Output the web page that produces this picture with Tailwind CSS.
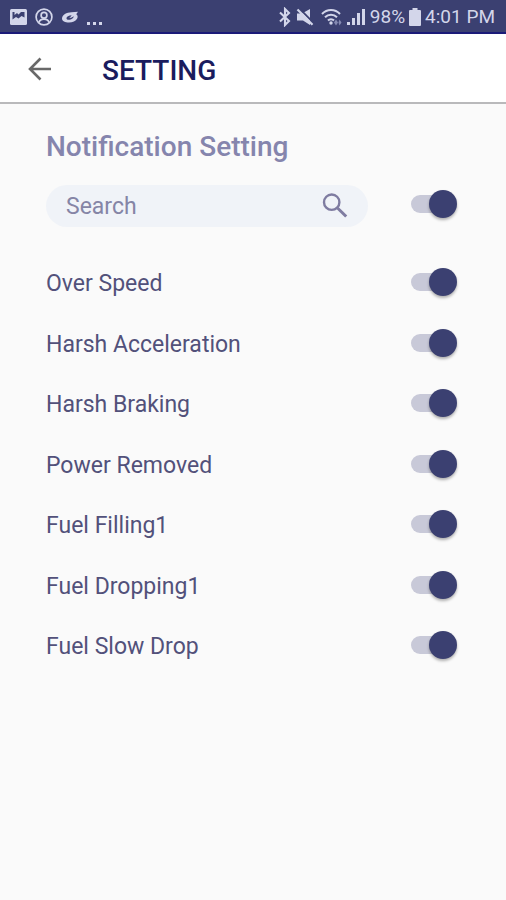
<!DOCTYPE html>
<html lang="en">
<head>
<meta charset="utf-8">
<meta name="viewport" content="width=device-width, initial-scale=1">
<title>Setting</title>
<script src="https://cdn.jsdelivr.net/npm/@tailwindcss/browser@4"></script>
</head>
<body class="min-h-screen bg-[#fafafa] font-['Roboto',sans-serif] text-[#52517a]">
  <!-- Status bar -->
  <div class="flex h-[34px] items-center justify-between border-b-2 border-[#1b1b78] bg-[#3b4071] pt-[2px] pr-[11px] pl-[9px] text-[#d3d6ea]">
    <div class="flex items-center gap-2">
      <svg class="h-[18px] w-[18px]" viewBox="0 0 18 18" aria-hidden="true">
        <rect x="1" y="1" width="17" height="16" rx="1.500" fill="currentColor"/>
        <path d="M3.500 4h2v3l2.500-2 1.500 1.500L12 4h3.500v5.500L12.500 8 9.500 10.500 7 9l-3.500 2.500z" fill="#3b4071"/>
      </svg>
      <svg class="h-[18px] w-[18px]" viewBox="0 0 18 18" fill="none" stroke="currentColor" stroke-width="1.700" aria-hidden="true">
        <circle cx="9" cy="9" r="7.900"/>
        <circle cx="9" cy="7.200" r="2.900"/>
        <path d="M4 14.500c.5-2.200 2.300-3.300 5-3.300s4.500 1.100 5 3.300"/>
      </svg>
      <svg class="h-[18px] w-[18px]" viewBox="0 0 18 18" aria-hidden="true">
        <path fill="currentColor" fill-rule="evenodd" d="M1 10.500C1 6.800 5.500 4.300 10.500 4.200l6.500-.4-1.800 2.400c1.600 1 1.800 2.600 1 4.300-1.300 2.700-4.700 4-8.200 4-3.900 0-7-1.300-7-4zM5.500 10.300c0 1.300 1.600 1.700 3.300 1.400 2-.4 3.800-1.800 4-3.500-1.200 1-2.600 1.700-4.600 1.500.9-.6 1.900-1.500 2.400-2.500-2.600.1-5.100 1.300-5.100 3.100z"/>
      </svg>
      <svg class="h-[18px] w-[16px]" viewBox="0 0 16 18" fill="currentColor" aria-hidden="true">
        <rect x="0" y="14" width="3" height="3"/><rect x="6" y="14" width="3" height="3"/><rect x="12" y="14" width="3" height="3"/>
      </svg>
    </div>
    <div class="flex items-center">
      <svg class="mr-[5px] h-[20px] w-[12px]" viewBox="0 0 12 20" fill="none" stroke="currentColor" stroke-width="2.100" aria-hidden="true">
        <path d="M1 5.500l9 8.500-4 4V2l4 4-9 8.500"/>
      </svg>
      <svg class="mr-[7px] h-[18px] w-[18px]" viewBox="0 0 18 18" aria-hidden="true">
        <path d="M1 5.500h5l8-4.500v16l-7-4.500H1z" fill="currentColor"/>
        <path d="M3.200 .3l15 15.200" stroke="#3b4071" stroke-width="1.800"/>
        <path d="M1.500 1.500l15 15.200" stroke="currentColor" stroke-width="2.200"/>
      </svg>
      <svg class="mr-[3px] h-[18px] w-[23px]" viewBox="0 0 23 18" fill="none" stroke="currentColor" stroke-width="2" aria-hidden="true">
        <path d="M1 6c5-5.300 13-5.300 18 0M4 9.300c3.300-3.500 8.700-3.500 12 0M7 12.500c1.600-1.700 4.400-1.700 6 0"/>
        <circle cx="10" cy="15" r="1.700" fill="currentColor" stroke="none"/>
        <g stroke="none" fill="#858ab2"><path d="M13 14.500l2-3 2 3-2 3zM18.500 11.500l2 3-2 3-1-3z"/></g>
      </svg>
      <svg class="mr-[5px] h-[18px] w-[18px]" viewBox="0 0 18 18" fill="currentColor" aria-hidden="true">
        <rect x="0" y="14" width="3" height="3"/><rect x="5" y="10" width="3" height="7"/><rect x="10" y="5" width="3" height="12"/><rect x="15" y="1" width="3" height="16"/>
      </svg>
      <span class="text-[19px] leading-6">98%</span>
      <svg class="mx-1 h-[18px] w-[12px]" viewBox="0 0 12 18" fill="currentColor" aria-hidden="true">
        <path d="M3.500 0h5v2H11a1 1 0 0 1 1 1v14a1 1 0 0 1-1 1H1a1 1 0 0 1-1-1V3a1 1 0 0 1 1-1h2.500z"/>
      </svg>
      <span class="text-[19px] leading-6">4:01 PM</span>
    </div>
  </div>

  <!-- App bar -->
  <header class="flex h-[70px] items-center gap-[50px] border-b-2 border-[#b9b9bb] bg-white pt-[2px] pl-7">
    <button type="button" aria-label="Back" class="text-[#696969]">
      <svg class="block h-6 w-6" viewBox="0 0 24 24" fill="none" stroke="currentColor" stroke-width="2.600" aria-hidden="true">
        <path d="M23 12H3M12.500 1.500L2 12l10.500 10.500"/>
      </svg>
    </button>
    <h1 class="pt-1 text-[28px] leading-8 font-medium text-[#1a1c5e]">SETTING</h1>
  </header>

  <main class="pt-[27px] pr-12 pl-[46px]">
    <h2 class="text-[28px] leading-8 font-medium text-[#8585ad]">Notification Setting</h2>

    <div class="mt-[22px] flex items-start justify-between gap-[43px]">
      <div class="flex h-[42px] min-w-0 flex-1 items-center rounded-full bg-[#f0f3f8] pr-5 pl-5">
        <input type="search" aria-label="Search" placeholder="Search" class="w-full min-w-0 flex-1 bg-transparent pt-[2px] text-[23px] leading-7 outline-none placeholder:text-[#8585a6]">
        <button type="button" aria-label="Run search" class="text-[#7f7ca1]">
          <svg class="block h-[26px] w-[26px]" viewBox="0 0 26 26" fill="none" stroke="currentColor" aria-hidden="true">
            <circle cx="9.700" cy="9.200" r="7.700" stroke-width="2.400"/>
            <path d="M15.500 15l8.700 8.500" stroke-width="3"/>
          </svg>
        </button>
      </div>
      <input type="checkbox" role="switch" checked aria-label="All notifications" class="mt-[5px] flex h-7 w-[47px] shrink-0 appearance-none items-center before:h-[18px] before:w-8 before:rounded-full before:bg-[#c8c9d8] after:-ml-[14px] after:size-7 after:rounded-full after:bg-[#3b4071] after:shadow-[0_2px_3px_rgba(0,0,0,0.3)]">
    </div>

    <ul class="mt-[25px] text-[23px] leading-7">
      <li class="flex h-[60px] items-center justify-between even:h-[61px]"><label for="s1" class="pt-1">Over Speed</label><input id="s1" type="checkbox" role="switch" checked class="flex h-7 w-[47px] shrink-0 appearance-none items-center before:h-[18px] before:w-8 before:rounded-full before:bg-[#c8c9d8] after:-ml-[14px] after:size-7 after:rounded-full after:bg-[#3b4071] after:shadow-[0_2px_3px_rgba(0,0,0,0.3)]"></li>
      <li class="flex h-[60px] items-center justify-between even:h-[61px]"><label for="s2" class="pt-1">Harsh Acceleration</label><input id="s2" type="checkbox" role="switch" checked class="flex h-7 w-[47px] shrink-0 appearance-none items-center before:h-[18px] before:w-8 before:rounded-full before:bg-[#c8c9d8] after:-ml-[14px] after:size-7 after:rounded-full after:bg-[#3b4071] after:shadow-[0_2px_3px_rgba(0,0,0,0.3)]"></li>
      <li class="flex h-[60px] items-center justify-between even:h-[61px]"><label for="s3" class="pt-1">Harsh Braking</label><input id="s3" type="checkbox" role="switch" checked class="flex h-7 w-[47px] shrink-0 appearance-none items-center before:h-[18px] before:w-8 before:rounded-full before:bg-[#c8c9d8] after:-ml-[14px] after:size-7 after:rounded-full after:bg-[#3b4071] after:shadow-[0_2px_3px_rgba(0,0,0,0.3)]"></li>
      <li class="flex h-[60px] items-center justify-between even:h-[61px]"><label for="s4" class="pt-1">Power Removed</label><input id="s4" type="checkbox" role="switch" checked class="flex h-7 w-[47px] shrink-0 appearance-none items-center before:h-[18px] before:w-8 before:rounded-full before:bg-[#c8c9d8] after:-ml-[14px] after:size-7 after:rounded-full after:bg-[#3b4071] after:shadow-[0_2px_3px_rgba(0,0,0,0.3)]"></li>
      <li class="flex h-[60px] items-center justify-between even:h-[61px]"><label for="s5" class="pt-1">Fuel Filling1</label><input id="s5" type="checkbox" role="switch" checked class="flex h-7 w-[47px] shrink-0 appearance-none items-center before:h-[18px] before:w-8 before:rounded-full before:bg-[#c8c9d8] after:-ml-[14px] after:size-7 after:rounded-full after:bg-[#3b4071] after:shadow-[0_2px_3px_rgba(0,0,0,0.3)]"></li>
      <li class="flex h-[60px] items-center justify-between even:h-[61px]"><label for="s6" class="pt-1">Fuel Dropping1</label><input id="s6" type="checkbox" role="switch" checked class="flex h-7 w-[47px] shrink-0 appearance-none items-center before:h-[18px] before:w-8 before:rounded-full before:bg-[#c8c9d8] after:-ml-[14px] after:size-7 after:rounded-full after:bg-[#3b4071] after:shadow-[0_2px_3px_rgba(0,0,0,0.3)]"></li>
      <li class="flex h-[60px] items-center justify-between even:h-[61px]"><label for="s7" class="pt-1">Fuel Slow Drop</label><input id="s7" type="checkbox" role="switch" checked class="flex h-7 w-[47px] shrink-0 appearance-none items-center before:h-[18px] before:w-8 before:rounded-full before:bg-[#c8c9d8] after:-ml-[14px] after:size-7 after:rounded-full after:bg-[#3b4071] after:shadow-[0_2px_3px_rgba(0,0,0,0.3)]"></li>
    </ul>
  </main>
</body>
</html>
